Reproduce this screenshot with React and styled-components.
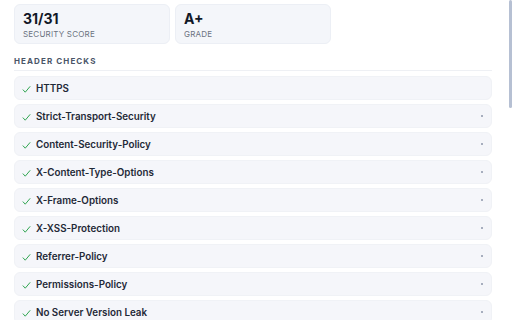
import React from 'react';
import styled, { createGlobalStyle } from 'styled-components';

const GlobalStyle = createGlobalStyle`
  html, body {
    margin: 0;
    padding: 0;
    background: #ffffff;
    overflow: hidden;
  }
  body {
    font-family: Inter, "Noto Sans", sans-serif;
    -webkit-font-smoothing: antialiased;
  }
`;

const Page = styled.div`
  position: relative;
  width: 512px;
  height: 320px;
  overflow: hidden;
  box-sizing: border-box;
  padding: 4px 20px 0 14px;
`;

const Scroll = styled.div`
  position: absolute;
  top: 0;
  right: 0;
  width: 3px;
  height: 108px;
  background: #b6c0d3;
  border-radius: 2px;
`;

const Stats = styled.div`
  display: grid;
  grid-template-columns: 156px 156px;
  gap: 5px;
`;

const StatCard = styled.div`
  background: #f4f6fa;
  border: 1px solid #eceff5;
  border-radius: 6px;
  height: 40px;
  box-sizing: border-box;
  padding: 5px 8px 0;
`;

const StatValue = styled.div`
  font-size: 14px;
  font-weight: 700;
  color: #111827;
  line-height: 18px;
`;

const StatLabel = styled.div`
  font-size: 8px;
  letter-spacing: 0.2px;
  color: #6b7280;
  text-transform: uppercase;
  line-height: 12px;
`;

const Heading = styled.div`
  margin-top: 12px;
  font-size: 8px;
  font-weight: 700;
  letter-spacing: 1.1px;
  color: #4a5568;
  text-transform: uppercase;
  padding-bottom: 4px;
  border-bottom: 1px solid #eef0f4;
`;

const List = styled.div`
  display: flex;
  flex-direction: column;
  gap: 4px;
  margin-top: 5px;
`;

const Row = styled.div`
  display: flex;
  align-items: center;
  height: 24px;
  background: #f5f6fa;
  border: 1px solid #f0f2f6;
  border-radius: 6px;
  box-sizing: border-box;
  padding: 0 8px 0 7px;
`;

const Check = styled.svg`
  width: 9px;
  height: 9px;
  margin-right: 5px;
  margin-top: 3px;
  flex-shrink: 0;
`;

const Name = styled.span`
  flex: 1;
  font-size: 9.8px;
  font-weight: 600;
  color: #1f2937;
`;

const Dot = styled.span`
  width: 2px;
  height: 2px;
  border-radius: 1px;
  background: #8d96aa;
  visibility: ${p => (p.$show ? 'visible' : 'hidden')};
`;

const checks = [
  { name: 'HTTPS', dot: false },
  { name: 'Strict-Transport-Security', dot: true },
  { name: 'Content-Security-Policy', dot: true },
  { name: 'X-Content-Type-Options', dot: true },
  { name: 'X-Frame-Options', dot: true },
  { name: 'X-XSS-Protection', dot: true },
  { name: 'Referrer-Policy', dot: true },
  { name: 'Permissions-Policy', dot: true },
  { name: 'No Server Version Leak', dot: true },
];

const CheckIcon = () => (
  <Check viewBox="0 0 10 10">
    <path d="M1.2 5.4 L3.6 8 L8.8 1.8" fill="none" stroke="#2ea44f" strokeWidth="1.1" strokeLinecap="round" strokeLinejoin="round" />
  </Check>
);

export default function App() {
  return (
    <Page>
      <GlobalStyle />
      <Stats>
        <StatCard>
          <StatValue>31/31</StatValue>
          <StatLabel>Security Score</StatLabel>
        </StatCard>
        <StatCard>
          <StatValue>A+</StatValue>
          <StatLabel>Grade</StatLabel>
        </StatCard>
      </Stats>
      <Heading>Header Checks</Heading>
      <List>
        {checks.map(c => (
          <Row key={c.name}>
            <CheckIcon />
            <Name>{c.name}</Name>
            <Dot $show={c.dot} />
          </Row>
        ))}
      </List>
      <Scroll />
    </Page>
  );
}
